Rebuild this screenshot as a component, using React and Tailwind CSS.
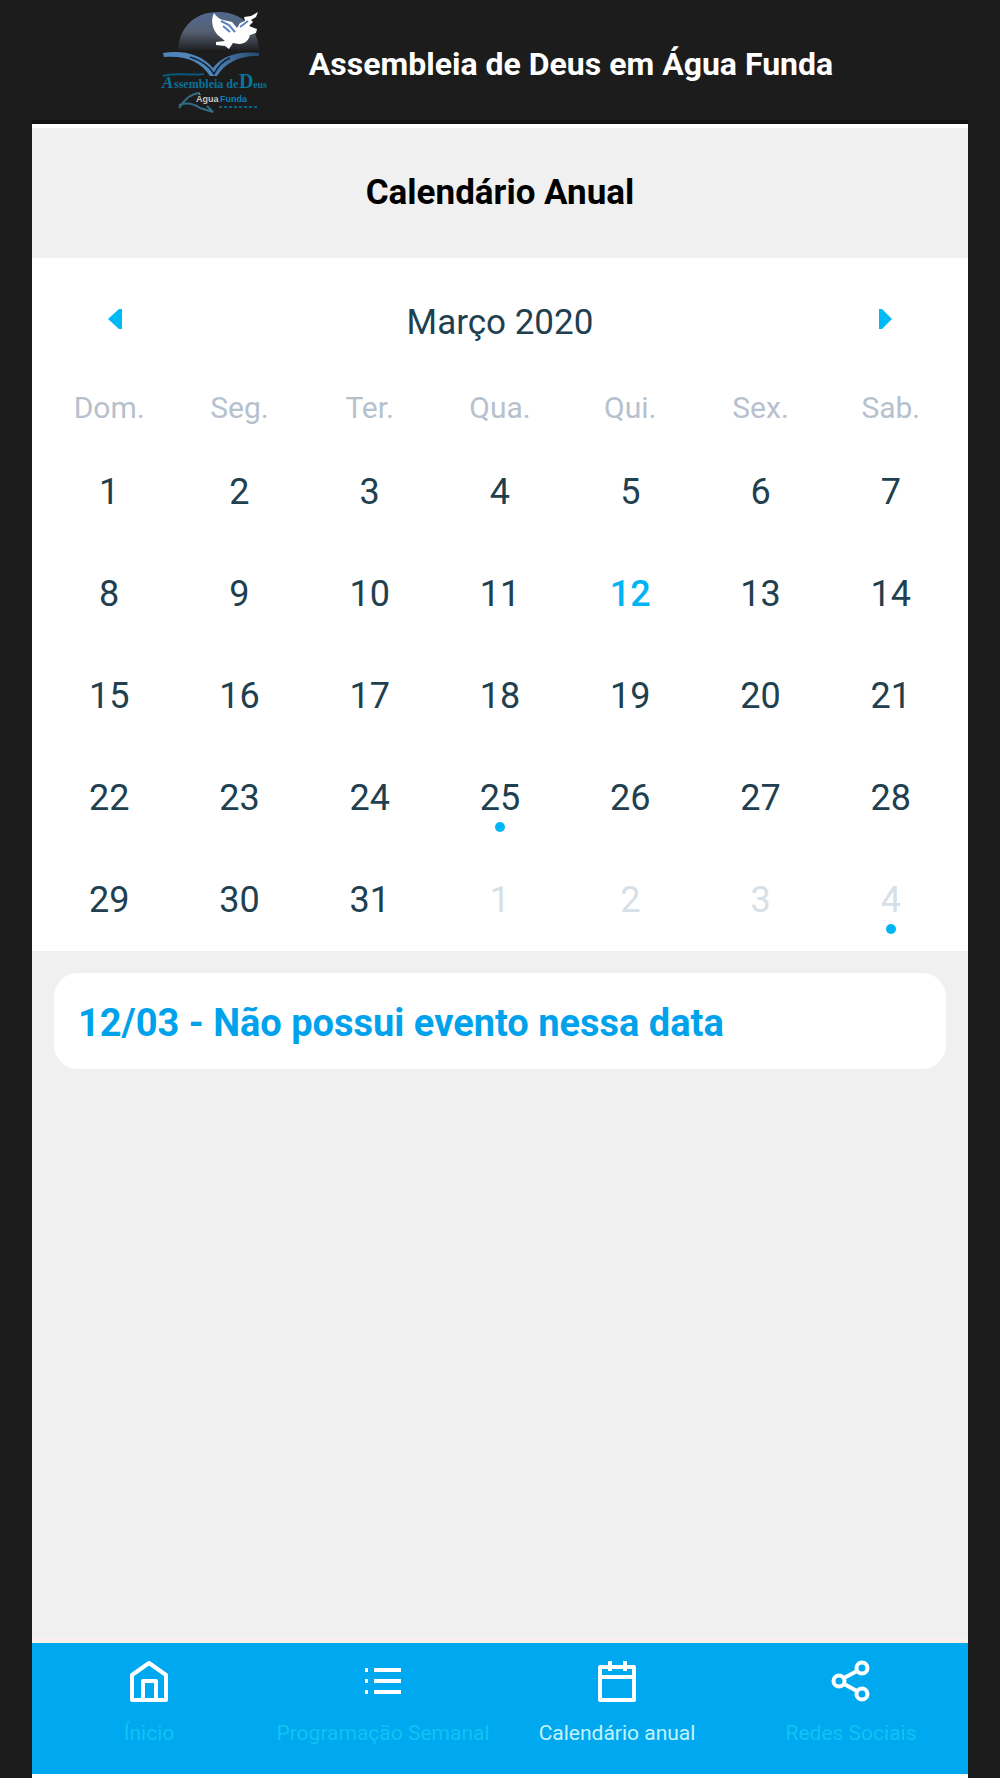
import React from "react";

const WEEKDAYS = ["Dom.", "Seg.", "Ter.", "Qua.", "Qui.", "Sex.", "Sab."];

const DAYS = [
  ...Array.from({ length: 31 }, (_, i) => ({ n: i + 1, today: i === 11, dot: i === 24 })),
  ...Array.from({ length: 4 }, (_, i) => ({ n: i + 1, other: true, dot: i === 3 })),
];
const WEEKS = [0, 1, 2, 3, 4].map((w) => DAYS.slice(w * 7, w * 7 + 7));

function Logo() {
  return (
    <svg className="h-[108px] w-[110px] shrink-0" viewBox="20 8 110 108" role="img" aria-label="Logo">
      <defs>
        <linearGradient id="dome" x1="0" y1="0" x2="0" y2="1">
          <stop offset="0" stopColor="#50688f" />
          <stop offset="0.5" stopColor="#566173" />
          <stop offset="1" stopColor="#202124" />
        </linearGradient>
        <linearGradient id="book" x1="0" y1="0" x2="1" y2="0">
          <stop offset="0" stopColor="#4e86bd" />
          <stop offset="0.5" stopColor="#4f87bb" />
          <stop offset="1" stopColor="#26496c" />
        </linearGradient>
      </defs>
      <path d="M39 50C40 28 55 12 79 12C104 12 119 29 120 50Z" fill="url(#dome)" />
      <path d="M75 13C77 16 80 19 84 20L93 22L98 28L101 23L106 21L105 17L112 16L119 12L117 17L112 20L114 22L110 26L118 29L117 33L111 35C110 40 106 44 100 44L94 43L90 49L86 46L77 45L77 42L86 41L80 36C74 31 71 21 75 13Z" fill="#fff" />
      <path d="M82 21L90 25L96 32M84 26L91 32M101 27L109 21" fill="none" stroke="#5b83bd" strokeWidth="2" />
      <path d="M24 53C41 50 62 53 74 68C84 54 103 51 120 53V56C101 55 86 63 78 76H71C62 62 47 55 25 57Z" fill="url(#book)" />
      <path d="M51 57Q68 62 75 74Q81 62 91 58" fill="none" stroke="#152335" strokeWidth="1.5" />
      <path d="M24 76C34 72 49 76 65 74" fill="none" stroke="#075a7b" strokeWidth="2" />
      <g fontFamily="'Liberation Serif', serif" fontWeight="700" fill="#08739b">
        <text x="23" y="88" fontSize="17" fontStyle="italic">A</text>
        <text x="35" y="88" fontSize="12">ssembleia de</text>
        <text x="100" y="88" fontSize="20">D</text>
        <text x="114" y="88" fontSize="10">eus</text>
      </g>
      <path d="M40 108C46 99 52 93 61 93M40 105Q51 101 61 108L74 112L68 106" fill="none" stroke="#326d83" strokeWidth="2" />
      <g fontFamily="'Liberation Sans', sans-serif" fontWeight="700" fontSize="9">
        <text x="57" y="102" fill="#c7c5c3">Água</text>
        <text x="81" y="102" fill="#0782b5">Funda</text>
      </g>
      <path d="M80 107H120" stroke="#08638a" strokeWidth="2" strokeDasharray="3 2" />
    </svg>
  );
}

function Icon({ children }) {
  return (
    <svg className="h-11 w-11" viewBox="0 0 44 44" fill="none" stroke="#fff" strokeWidth="4" strokeLinejoin="round" aria-hidden="true">
      {children}
    </svg>
  );
}

const NAV = [
  {
    label: "Ínicio",
    icon: <path d="M5 41V16L22 4L39 16V41ZM16 40V22H29V40" />,
  },
  {
    label: "Programação Semanal",
    icon: (
      <>
        <path d="M4 11H7M4 22H7M4 33H7" />
        <path d="M13 11H40M13 22H40M13 33H40" />
      </>
    ),
  },
  {
    label: "Calendário anual",
    active: true,
    icon: <path d="M5 8H39V41H5ZM5 18H39M15 2V12M30 2V12" />,
  },
  {
    label: "Redes Sociais",
    icon: (
      <>
        <circle cx="10" cy="22" r="5.500" />
        <circle cx="33" cy="9" r="5.500" />
        <circle cx="33" cy="35" r="5.500" />
        <path d="M15 19L28 12M15 25L28 32" />
      </>
    ),
  },
];

export default function App() {
  return (
    <div className="min-h-screen bg-[#1c1c1c] px-8 font-['Roboto',sans-serif]">
      <div className="flex min-h-screen flex-col bg-[#f0f0f0]">
        <header className="flex h-31 items-start justify-center gap-10 border-b-4 border-[#141414] bg-[#1c1c1c] pt-2 pr-2">
          <Logo />
          <p className="pt-9 text-[32px] leading-10 font-bold whitespace-nowrap text-white">
            Assembleia de Deus em Água Funda
          </p>
        </header>

        <main className="flex flex-1 flex-col">
          <h1 className="flex h-[134px] items-center justify-center border-t-4 border-white text-[35px] font-bold text-black">
            Calendário Anual
          </h1>

          <section className="bg-white px-3" aria-label="Calendário">
            <div className="flex h-[130px] items-center justify-between px-14">
              <button type="button" aria-label="Mês anterior" className="p-2 pb-4">
                <svg className="h-5 w-3.5" viewBox="0 0 14 20" aria-hidden="true">
                  <path d="M0 10L11 0H14V20H11Z" fill="#00b9f7" />
                </svg>
              </button>
              <h2 className="text-[35px] text-[#21404f]">Março 2020</h2>
              <button type="button" aria-label="Próximo mês" className="p-2 pb-4">
                <svg className="h-5 w-3.5" viewBox="0 0 14 20" aria-hidden="true">
                  <path d="M14 10L4 0H1V20H4Z" fill="#00b9f7" />
                </svg>
              </button>
            </div>
            <table className="w-full table-fixed text-center">
              <thead>
                <tr>
                  {WEEKDAYS.map((d) => (
                    <th key={d} className="h-[53px] p-0 text-center align-top text-[30px] leading-10 font-normal text-[#b6c1cd]">{d}</th>
                  ))}
                </tr>
              </thead>
              <tbody>
                {WEEKS.map((week, w) => (
                  <tr key={w}>
                    {week.map((day, i) => (
                      <td key={i} className="h-[102px] p-0">
                        <button
                          type="button"
                          className={
                            "relative px-3 text-[36px] leading-10 " +
                            (day.today ? "font-medium text-[#00b5f5]" : day.other ? "text-[#d5e0e8]" : "text-[#21404f]")
                          }
                        >
                          {day.n}
                          {day.dot && (
                            <span className="absolute inset-x-0 top-full mx-auto mt-1 h-2.5 w-2.5 rounded-full bg-[#00b5f5]" />
                          )}
                        </button>
                      </td>
                    ))}
                  </tr>
                ))}
              </tbody>
            </table>
          </section>

          <section className="mx-[22px] mt-[22px] flex h-24 items-center rounded-3xl bg-white px-6 pt-1" aria-label="Eventos">
            <p className="text-[38px] font-bold text-[#00a2ec]">12/03 - Não possui evento nessa data</p>
          </section>
        </main>

        <nav className="grid h-[139px] grid-cols-4 border-t-4 border-b-4 border-t-[#fff0ec] border-b-white bg-[#00a8f0]">
          {NAV.map((item) => (
            <a
              key={item.label}
              href="#"
              className={
                "flex flex-col items-center gap-4 pt-4 text-[21px] leading-7 whitespace-nowrap " +
                (item.active ? "text-[#c4f4fd]" : "text-[#10c3f3]")
              }
            >
              <Icon>{item.icon}</Icon>
              {item.label}
            </a>
          ))}
        </nav>
      </div>
    </div>
  );
}
